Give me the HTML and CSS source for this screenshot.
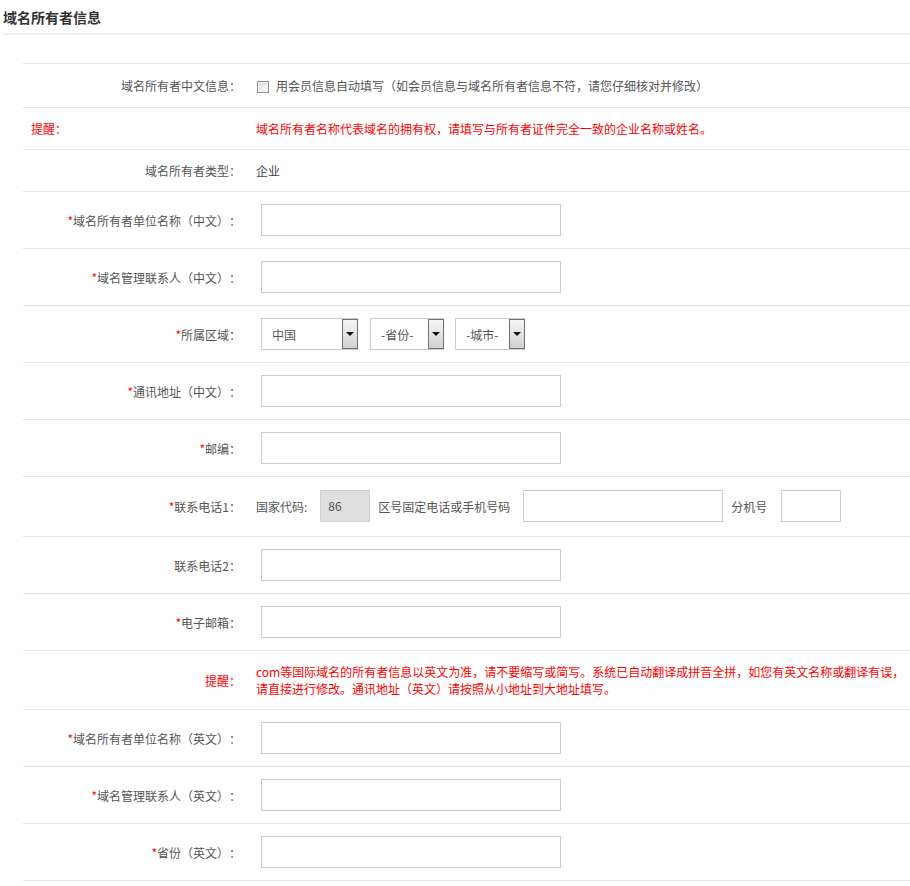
FILE: index.html
```html
<!DOCTYPE html>
<html lang="zh-CN">
<head>
<meta charset="utf-8">
<title>域名所有者信息</title>
<link rel="stylesheet" href="styles.css">
</head>
<body>
<div class="page">
  <h2 class="title">域名所有者信息</h2>
  <table class="form">
    <tr class="row-check">
      <td class="lbl">域名所有者中文信息：</td>
      <td class="val"><span class="chk"></span><span class="chk-text">用会员信息自动填写（如会员信息与域名所有者信息不符，请您仔细核对并修改）</span></td>
    </tr>
    <tr>
      <td class="lbl lbl-tip tip">提醒：</td>
      <td class="val tip">域名所有者名称代表域名的拥有权，请填写与所有者证件完全一致的企业名称或姓名。</td>
    </tr>
    <tr>
      <td class="lbl">域名所有者类型：</td>
      <td class="val dark">企业</td>
    </tr>
    <tr>
      <td class="lbl"><span class="req">*</span>域名所有者单位名称（中文）：</td>
      <td class="val"><span class="inp"></span></td>
    </tr>
    <tr>
      <td class="lbl"><span class="req">*</span>域名管理联系人（中文）：</td>
      <td class="val"><span class="inp"></span></td>
    </tr>
    <tr>
      <td class="lbl"><span class="req">*</span>所属区域：</td>
      <td class="val">
        <div class="sels">
          <div class="sel sel-1"><span class="sel-text">中国</span><span class="sel-btn"></span></div>
          <div class="sel sel-2"><span class="sel-text">-省份-</span><span class="sel-btn"></span></div>
          <div class="sel sel-3"><span class="sel-text">-城市-</span><span class="sel-btn"></span></div>
        </div>
      </td>
    </tr>
    <tr>
      <td class="lbl"><span class="req">*</span>通讯地址（中文）：</td>
      <td class="val"><span class="inp"></span></td>
    </tr>
    <tr>
      <td class="lbl"><span class="req">*</span>邮编：</td>
      <td class="val"><span class="inp"></span></td>
    </tr>
    <tr class="row-phone">
      <td class="lbl"><span class="req">*</span>联系电话1：</td>
      <td class="val">
        <div class="phone">
          <span class="ph-lbl">国家代码:</span>
          <span class="code">86</span>
          <span class="ph-area">区号固定电话或手机号码</span>
          <span class="inp inp-phone"></span>
          <span class="ph-ext">分机号</span>
          <span class="inp inp-ext"></span>
        </div>
      </td>
    </tr>
    <tr>
      <td class="lbl">联系电话2：</td>
      <td class="val"><span class="inp"></span></td>
    </tr>
    <tr>
      <td class="lbl"><span class="req">*</span>电子邮箱：</td>
      <td class="val"><span class="inp"></span></td>
    </tr>
    <tr>
      <td class="lbl tip">提醒：</td>
      <td class="val tip">com等国际域名的所有者信息以英文为准，请不要缩写或简写。系统已自动翻译成拼音全拼，如您有英文名称或翻译有误，<br>请直接进行修改。通讯地址（英文）请按照从小地址到大地址填写。</td>
    </tr>
    <tr>
      <td class="lbl"><span class="req">*</span>域名所有者单位名称（英文）：</td>
      <td class="val"><span class="inp"></span></td>
    </tr>
    <tr>
      <td class="lbl"><span class="req">*</span>域名管理联系人（英文）：</td>
      <td class="val"><span class="inp"></span></td>
    </tr>
    <tr>
      <td class="lbl"><span class="req">*</span>省份（英文）：</td>
      <td class="val"><span class="inp"></span></td>
    </tr>
  </table>
</div>
</body>
</html>
```

FILE: styles.css
```css
html, body {
  margin: 0;
  padding: 0;
  background: #fff;
}
body {
  font-family: "Noto Sans CJK SC", "Noto Sans", sans-serif;
  font-size: 12px;
  color: #555;
  text-spacing-trim: space-all;
}
.page {
  padding-left: 3px;
}
.title {
  margin: 0;
  padding: 8px 0 7px 0;
  font-size: 14px;
  line-height: 18px;
  font-weight: bold;
  color: #333;
  border-bottom: 2px solid #f0f0f0;
}
.form {
  margin: 28px 0 0 20px;
  width: 887px;
  border-collapse: collapse;
}
.form tr {
  border-top: 1px solid #e6e6e6;
}
.form tr:last-child {
  border-bottom: 1px solid #e6e6e6;
}
.form td {
  padding: 12px 0;
  line-height: 17px;
  vertical-align: middle;
}
.lbl {
  width: 218px;
  text-align: right;
  white-space: nowrap;
}
.lbl-tip {
  text-align: left;
  padding-left: 8px !important;
  width: 210px;
}
.val {
  padding-left: 15px !important;
}
.tip {
  color: #ff0000;
}
.dark {
  color: #444;
}
.req {
  color: #ff0000;
}
.row-check td {
  padding: 13px 0;
}
.chk {
  display: inline-block;
  vertical-align: -2px;
  width: 12px;
  height: 12px;
  box-sizing: border-box;
  margin-left: 1px;
  margin-right: 7px;
  border: 1px solid #8e8e8e;
  background: linear-gradient(135deg, #d8d8d8 0%, #f2f2f2 70%, #fafafa 100%);
  box-shadow: inset 0 0 0 1px #f4f4f4;
}
.inp {
  display: block;
  box-sizing: border-box;
  width: 300px;
  height: 32px;
  margin-left: 5px;
  border: 1px solid #cccccc;
  background: #fff;
}
.sels {
  display: flex;
  margin-left: 5px;
  gap: 12px;
}
.sel {
  display: flex;
  align-items: center;
  box-sizing: border-box;
  height: 32px;
  border: 1px solid #cccccc;
  background: #fff;
}
.sel-1 { width: 97px; }
.sel-2 { width: 74px; }
.sel-3 { width: 70px; margin-left: -1px; }
.sel-text {
  flex: 1;
  padding-left: 10px;
  color: #555;
}
.sel-btn {
  align-self: stretch;
  width: 16px;
  box-sizing: border-box;
  margin-right: -1px;
  border: 1px solid #707070;
  background: linear-gradient(#f6f6f6, #d0d0d0);
  display: flex;
  align-items: center;
  justify-content: center;
}
.sel-btn::after {
  content: "";
  width: 0;
  height: 0;
  border-left: 4px solid transparent;
  border-right: 4px solid transparent;
  border-top: 4px solid #111;
}
.row-phone td {
  padding: 13px 0 14px 0;
}
.phone {
  display: flex;
  align-items: center;
}
.ph-lbl {
  margin-right: 13px;
}
.code {
  box-sizing: border-box;
  width: 50px;
  height: 32px;
  line-height: 30px;
  padding-left: 7px;
  border: 1px solid #d0d0d0;
  background: #dedede;
  color: #555;
  margin-right: 8px;
}
.ph-area {
  margin-right: 13px;
}
.inp-phone {
  width: 200px;
  margin-left: 0;
  margin-right: 8px;
}
.ph-ext {
  margin-right: 14px;
}
.inp-ext {
  width: 60px;
  margin-left: 0;
}
```
